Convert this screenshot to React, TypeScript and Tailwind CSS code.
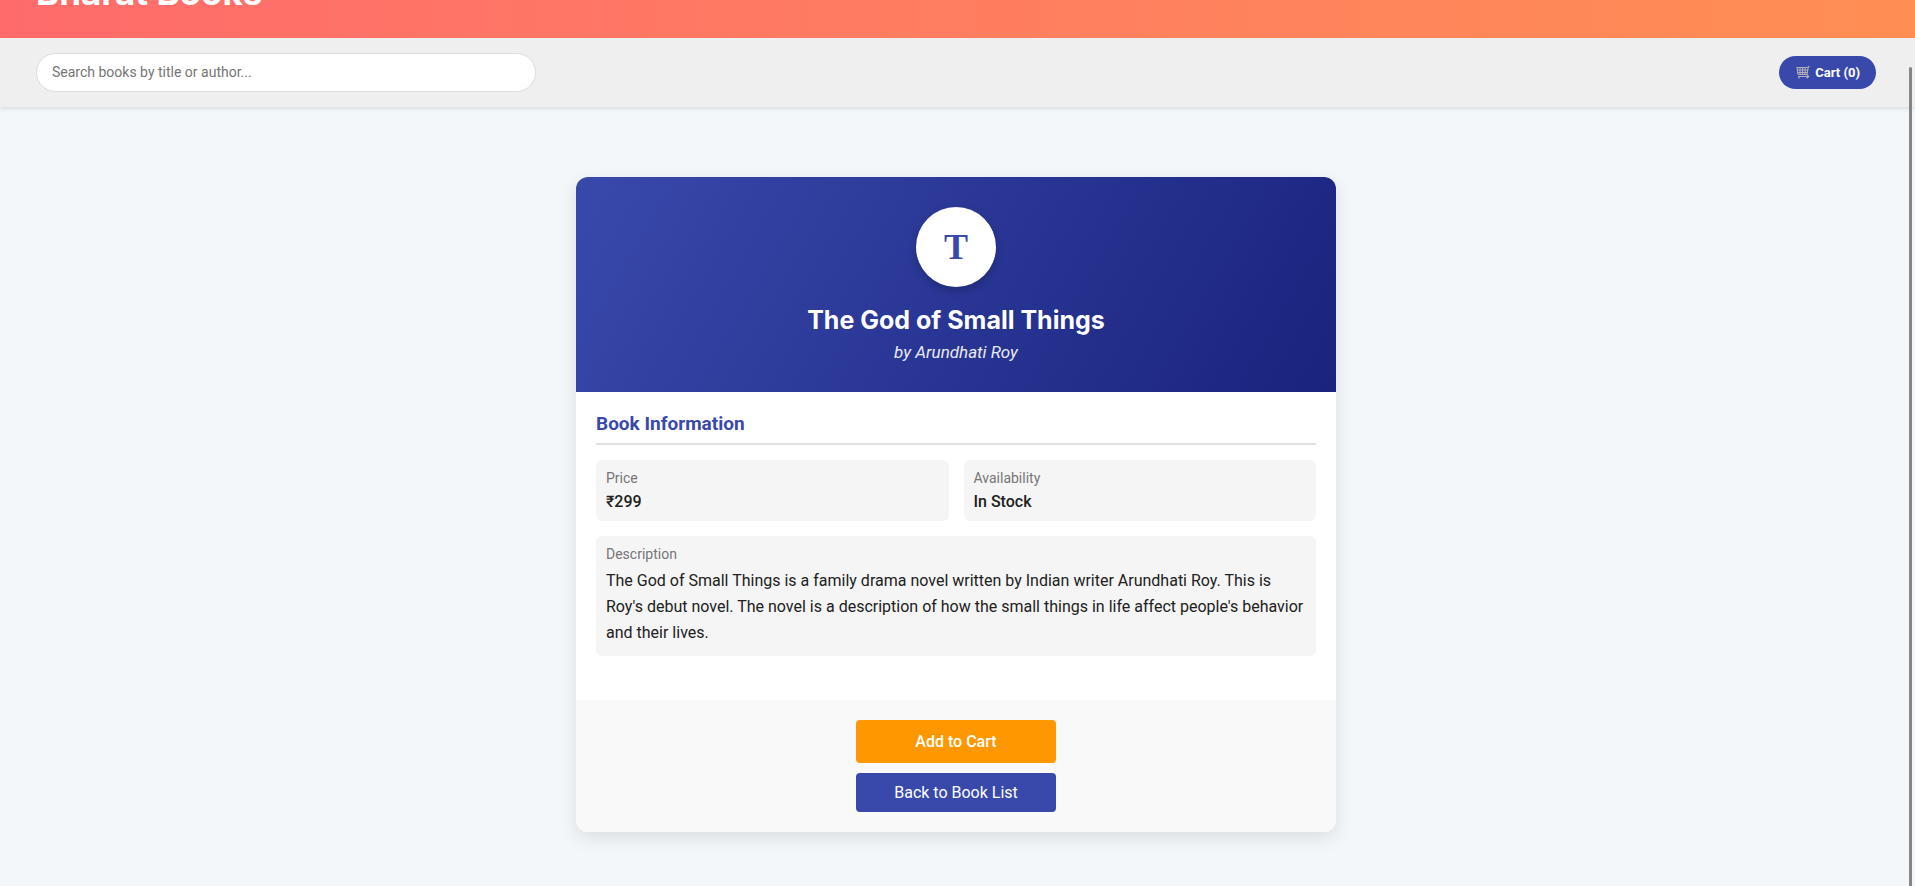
import React from "react";

function CartIcon() {
  return (
    <svg width="14" height="13" viewBox="0 0 14 13" fill="none" stroke="#b5b0b5" strokeWidth="1" aria-hidden="true">
      <path d="M.5 1.5h11M1 4h10.5M1.5 6.5h9.5M2 8.5h9M1 1.5l1 7M4 1.5v7M6.5 1.5v7M9 1.5v7" />
      <path d="M13.5.5h-1.2L11 8.5l1.5 2H2" strokeWidth="1.2" />
      <circle cx="3" cy="11.8" r="0.8" fill="#b5b0b5" stroke="none" />
      <circle cx="11.5" cy="11.6" r="1" fill="#b5b0b5" stroke="none" />
    </svg>
  );
}

function InfoItem({ label, value }: { label: string; value: string }) {
  return (
    <div className="rounded-md bg-[#f5f5f5] p-2.5 text-[#212121]">
      <dt className="text-sm leading-4 text-[#757575]">{label}</dt>
      <dd className="mt-1.5 text-base leading-[19px] font-medium">{value}</dd>
    </div>
  );
}

export default function App() {
  return (
    <div className="relative flex h-screen flex-col overflow-hidden bg-[#f3f7fa] font-['Roboto',sans-serif]">
      <header className="flex h-[38px] shrink-0 items-end bg-linear-to-r from-[#ff6b6b] to-[#ff8e53] px-9 pb-[26px]">
        <h1 className="font-['Inter',sans-serif] text-[35px] leading-10 font-bold text-white">Bharat Books</h1>
      </header>

      <nav className="z-10 flex h-[69px] shrink-0 items-center justify-between bg-[#efefef] pr-[39px] pl-9 shadow-[0_2px_4px_rgba(0,0,0,0.1)]">
        <input
          type="text"
          aria-label="Search books"
          placeholder="Search books by title or author..."
          className="h-[39px] w-[500px] rounded-full border border-[#dddddd] bg-white px-[15px] pb-0.5 text-sm outline-none placeholder:text-[#757575]"
        />
        <button type="button" className="flex h-[33px] items-center gap-[5px] rounded-full bg-[#3949ab] pr-4 pl-[17px] text-[13px] font-bold text-white">
          <CartIcon />
          Cart (0)
        </button>
      </nav>

      <main className="flex justify-center pt-[70px] pr-[3px]">
        <article className="w-full max-w-[760px] overflow-hidden rounded-xl bg-white shadow-[0_6px_18px_rgba(0,0,0,0.1)]">
          <div className="flex flex-col items-center bg-linear-[120deg] from-[#3949ab] to-[#1a237e] py-[30px] text-white">
            <div className="flex size-20 items-center justify-center rounded-full bg-white font-['Liberation_Serif',serif] text-4xl font-bold text-[#3949ab] shadow-[0_4px_8px_rgba(0,0,0,0.2)]">
              T
            </div>
            <h2 className="mt-[15px] font-['Inter',sans-serif] text-[25px] leading-9 font-bold">The God of Small Things</h2>
            <p className="mt-1 text-[17px] leading-5 italic opacity-90">by Arundhati Roy</p>
          </div>

          <section className="px-5 pt-5 pb-11">
            <h3 className="border-b-2 border-[#e0e0e0] pb-2 text-[19px] leading-[23px] font-bold text-[#3949ab]">Book Information</h3>
            <dl className="mt-[15px] grid grid-cols-2 gap-[15px]">
              <InfoItem label="Price" value="₹299" />
              <InfoItem label="Availability" value="In Stock" />
              <div className="col-span-2 rounded-md bg-[#f5f5f5] p-2.5 text-[#212121]">
                <dt className="text-sm leading-4 text-[#757575]">Description</dt>
                <dd className="mt-1.5 text-base leading-[26px]">
                  The God of Small Things is a family drama novel written by Indian writer Arundhati Roy. This is Roy's debut
                  novel. The novel is a description of how the small things in life affect people's behavior and their lives.
                </dd>
              </div>
            </dl>
          </section>

          <footer className="flex flex-col items-center gap-2.5 bg-[#f9f9f9] p-5">
            <button type="button" className="h-[43px] w-[200px] rounded bg-[#ff9800] text-base font-medium text-white">
              Add to Cart
            </button>
            <a href="#books" className="flex h-[39px] w-[200px] items-center justify-center rounded bg-[#3949ab] text-base text-white">
              Back to Book List
            </a>
          </footer>
        </article>
      </main>

      <div className="absolute top-[67px] right-[3px] bottom-0 z-20 w-[3px] rounded-t-full bg-[#858585]" />
    </div>
  );
}
